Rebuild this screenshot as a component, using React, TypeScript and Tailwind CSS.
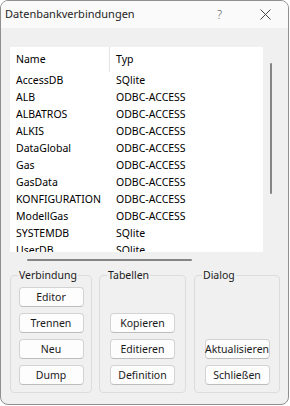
import React from "react";

const rows: [string, string][] = [
  ["AccessDB", "SQlite"],
  ["ALB", "ODBC-ACCESS"],
  ["ALBATROS", "ODBC-ACCESS"],
  ["ALKIS", "ODBC-ACCESS"],
  ["DataGlobal", "ODBC-ACCESS"],
  ["Gas", "ODBC-ACCESS"],
  ["GasData", "ODBC-ACCESS"],
  ["KONFIGURATION", "ODBC-ACCESS"],
  ["ModellGas", "ODBC-ACCESS"],
  ["SYSTEMDB", "SQlite"],
  ["UserDB", "SQlite"],
];

function Btn({ label }: { label?: string }) {
  if (!label) return <div className="h-[20px]" />;
  return (
    <button className="mx-auto flex h-[20px] w-[65px] items-center justify-center whitespace-nowrap rounded-[4px] border border-[#d3d3d3] border-b-[#bdbdbd] bg-[#fdfdfd] text-[10.5px] leading-none text-[#1a1a1a]">
      {label}
    </button>
  );
}

function Group({
  title,
  width,
  className,
  buttons,
}: {
  title: string;
  width: string;
  className?: string;
  buttons: (string | undefined)[];
}) {
  return (
    <fieldset
      className={`${width} ${className ?? ""} h-[126px] rounded-[4px] border border-[#dcdcdc] px-0 pb-[6px] pt-[4px]`}
    >
      <legend className="ml-[7px] px-[1px] text-[10.5px] leading-[16px] text-[#1a1a1a]">
        {title}
      </legend>
      <div className="flex flex-col gap-[6px]">
        {buttons.map((b, i) => (
          <Btn key={i} label={b} />
        ))}
      </div>
    </fieldset>
  );
}

export default function App() {
  return (
    <div
      className="h-[405px] w-[289px] overflow-hidden rounded-[8px] border border-[#8f8f8f] bg-[#f0f0f0] text-black"
      style={{ fontFamily: '"Noto Sans", "Open Sans", sans-serif' }}
    >
      {/* Title bar */}
      <div className="flex h-[27px] items-center bg-[#fafafa] pl-[4px]">
        <span className="text-[11px] text-[#1f1f1f]">Datenbankverbindungen</span>
        <span className="ml-auto mr-[38px] text-[12px] font-light text-[#5a5a5a]">?</span>
        <svg width="11" height="11" viewBox="0 0 11 11" className="mr-[17px]">
          <path d="M0.5 0.5 L10.5 10.5 M10.5 0.5 L0.5 10.5" stroke="#444" strokeWidth="1" fill="none" />
        </svg>
      </div>

      {/* Body */}
      <div className="pl-[9px] pt-[19px]">
        {/* List control */}
        <div className="w-[270px]">
          <div className="flex">
            <div className="h-[205px] w-[253px] overflow-hidden bg-white text-[10.5px]">
              <div className="flex h-[25px] items-center">
                <div className="flex h-full w-[100px] items-center border-r border-[#e5e5e5] pl-[6px]">
                  Name
                </div>
                <div className="pl-[6px]">Typ</div>
              </div>
              {rows.map(([n, t]) => (
                <div key={n} className="flex h-[17px] items-center whitespace-nowrap">
                  <div className="w-[100px] pl-[6px]">{n}</div>
                  <div className="pl-[6px]">{t}</div>
                </div>
              ))}
            </div>
            <div className="w-[17px] pt-[16px]">
              <div className="ml-[7px] h-[131px] w-[2px] rounded-full bg-[#858585]" />
            </div>
          </div>
          <div className="h-[11px] pt-[7px]">
            <div className="ml-[17px] h-[2px] w-[165px] rounded-full bg-[#858585]" />
          </div>
        </div>

        {/* Groups */}
        <div className="mt-[4px] flex">
          <Group
            title="Verbindung"
            width="w-[82px]"
            buttons={["Editor", "Trennen", "Neu", "Dump"]}
          />
          <Group
            title="Tabellen"
            width="w-[87px]"
            className="ml-[7px]"
            buttons={[undefined, "Kopieren", "Editieren", "Definition"]}
          />
          <Group
            title="Dialog"
            width="w-[86px]"
            className="ml-[8px]"
            buttons={[undefined, undefined, "Aktualisieren", "Schließen"]}
          />
        </div>
      </div>
    </div>
  );
}
